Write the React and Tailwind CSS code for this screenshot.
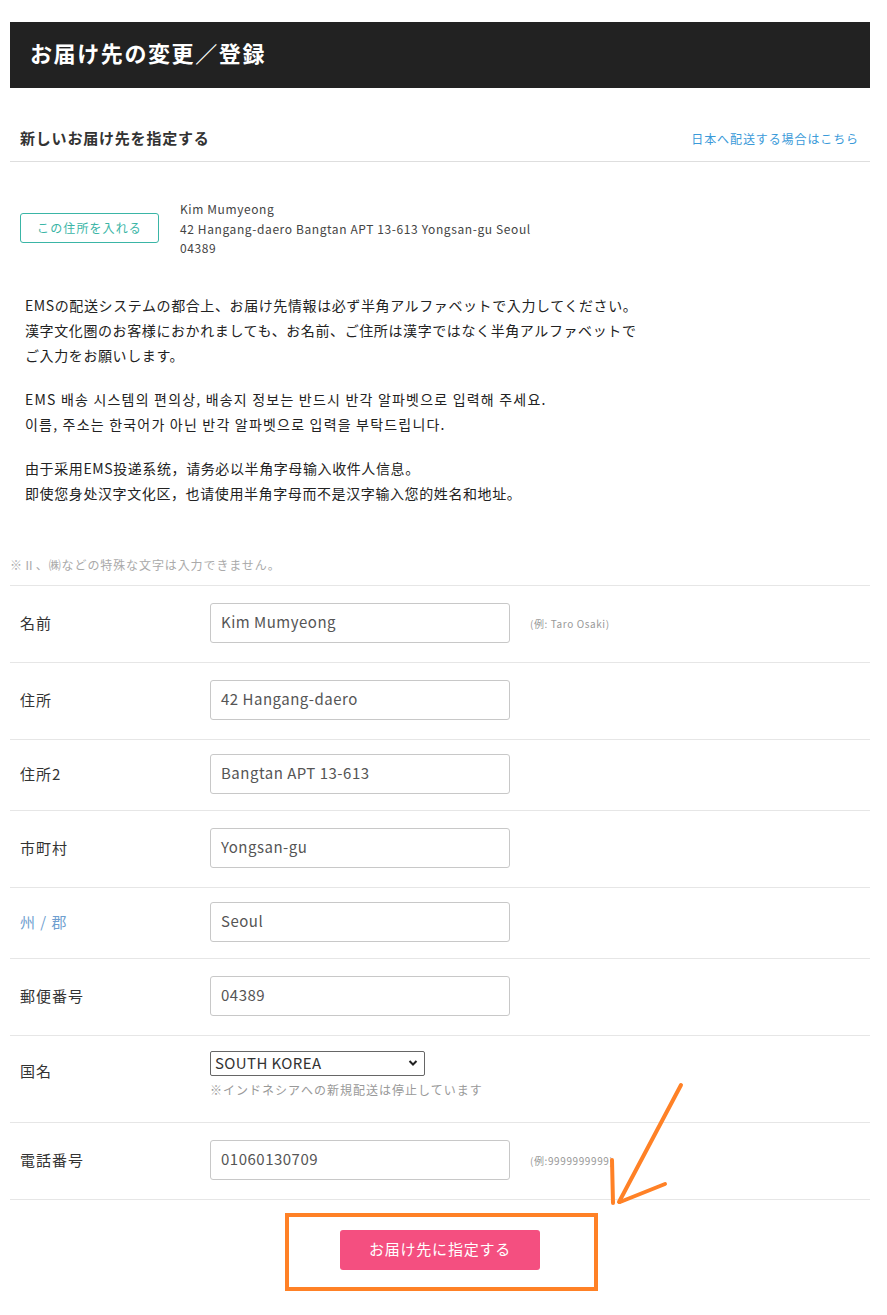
import React from "react";

const jp = { fontFamily: '"Noto Sans CJK JP", "Noto Sans", sans-serif' };

function Row({ label, value, hint, h, blue }) {
  return (
    <div className={`flex items-center border-t border-[#e6e6e6] px-[10px] ${h}`}>
      <div className={`w-[190px] text-[15px] tracking-[1px] ${blue ? "text-[#6f9fd0]" : "text-[#333]"}`}>{label}</div>
      <div className="w-[300px] h-[40px] border border-[#c8c8c8] rounded-[3px] flex items-center px-[10px] text-[15px] text-[#555] tracking-[0.5px] -mt-[2px]">
        {value}
      </div>
      {hint && <div className="ml-[20px] text-[10px] text-[#999] tracking-[0.6px]">{hint}</div>}
    </div>
  );
}

export default function App() {
  return (
    <div className="relative w-[887px] h-[1315px] bg-white overflow-hidden" style={jp}>
      <div className="pt-[22px] px-[10px] w-[880px]">
        <div className="h-[66px] bg-[#222] flex items-center pl-[20px] pb-[6px]">
          <h1 className="text-[22px] font-bold text-white tracking-[1.6px]">お届け先の変更／登録</h1>
        </div>
        <div className="h-[74px] flex items-end justify-between border-b border-[#dedede] pb-[12px] px-[10px]">
          <div className="text-[15px] font-bold text-[#333] leading-[22px] tracking-[0.8px]">新しいお届け先を指定する</div>
          <div className="text-[12px] text-[#3a9ad9] tracking-[0.9px] leading-[18px] pb-[1px] pr-[1px]">日本へ配送する場合はこちら</div>
        </div>

        <div className="flex items-center pt-[37px] px-[10px]">
          <div className="w-[139px] h-[30px] border border-[#3ab5a6] rounded-[3px] flex items-center justify-center text-[12px] text-[#3ab5a6] tracking-[1.1px]">
            この住所を入れる
          </div>
          <div className="ml-[21px] text-[12px] text-[#444] leading-[19.5px] tracking-[0.6px]">
            <div>Kim Mumyeong</div>
            <div>42 Hangang-daero Bangtan APT 13-613 Yongsan-gu Seoul</div>
            <div>04389</div>
          </div>
        </div>

        <div className="mt-[35px] pl-[15px] text-[14px] text-[#222] leading-[25px]">
          <p className="mb-[19px] tracking-[0.6px]">
            EMSの配送システムの都合上、お届け先情報は必ず半角アルファベットで入力してください。<br />
            漢字文化圏のお客様におかれましても、お名前、ご住所は漢字ではなく半角アルファベットで<br />
            ご入力をお願いします。
          </p>
          <p className="mb-[19px] tracking-[1.2px]" style={{ fontFamily: '"Noto Sans CJK KR", "Noto Sans", sans-serif' }}>
            EMS 배송 시스템의 편의상, 배송지 정보는 반드시 반각 알파벳으로 입력해 주세요.<br />
            이름, 주소는 한국어가 아닌 반각 알파벳으로 입력을 부탁드립니다.
          </p>
          <p className="tracking-[0.6px]" style={{ fontFamily: '"Noto Sans CJK SC", "Noto Sans", sans-serif' }}>
            由于采用EMS投递系统，请务必以半角字母输入收件人信息。<br />
            即使您身处汉字文化区，也请使用半角字母而不是汉字输入您的姓名和地址。
          </p>
        </div>

        <div className="mt-[50px] pb-[11px] text-[12px] text-[#aaa] leading-[18px] tracking-[0.9px]">※Ⅱ、㈱などの特殊な文字は入力できません。</div>

        <Row label="名前" value="Kim Mumyeong" hint="(例: Taro Osaki)" h="h-[77px]" />
        <Row label="住所" value="42  Hangang-daero" h="h-[77px]" />
        <Row label="住所2" value="Bangtan APT 13-613" h="h-[71px]" />
        <Row label="市町村" value="Yongsan-gu" h="h-[77px]" />
        <Row label="州 / 郡" value="Seoul" h="h-[71px]" blue />
        <Row label="郵便番号" value="04389" h="h-[77px]" />

        <div className="flex items-start border-t border-[#e6e6e6] px-[10px] h-[87px]">
          <div className="w-[190px] text-[15px] tracking-[1px] text-[#333] pt-[24px]">国名</div>
          <div className="pt-[15px]">
            <div className="w-[215px] h-[25px] border border-[#666] rounded-[2px] flex items-center justify-between pl-[4px] pr-[6px] text-[15px] text-[#333] tracking-[0.4px]">
              <span>SOUTH KOREA</span>
              <svg width="10" height="8" viewBox="0 0 10 8">
                <path d="M1.5 2 L5 5.5 L8.5 2" fill="none" stroke="#222" strokeWidth="2" />
              </svg>
            </div>
            <div className="mt-[5px] text-[12px] text-[#999] leading-[18px] tracking-[1px]">※インドネシアへの新規配送は停止しています</div>
          </div>
        </div>

        <Row label="電話番号" value="01060130709" hint="(例:9999999999)" h="h-[77px]" />

        <div className="border-t border-[#e6e6e6] flex justify-center pt-[30px]">
          <button className="w-[200px] h-[40px] bg-[#f44f80] rounded-[3px] text-white text-[15px] tracking-[0.8px]">
            お届け先に指定する
          </button>
        </div>
      </div>

      <div className="absolute left-[285px] top-[1213px] w-[313px] h-[78px] border-[4px] border-[#ff8126]" />
      <svg className="absolute left-0 top-0 pointer-events-none" width="887" height="1315">
        <g stroke="#ff8126" strokeWidth="4" strokeLinecap="round" fill="none">
          <path d="M681 1085 L619 1202" />
          <path d="M612 1160 L613 1203" />
          <path d="M665 1184 L620 1202" />
        </g>
      </svg>
    </div>
  );
}
